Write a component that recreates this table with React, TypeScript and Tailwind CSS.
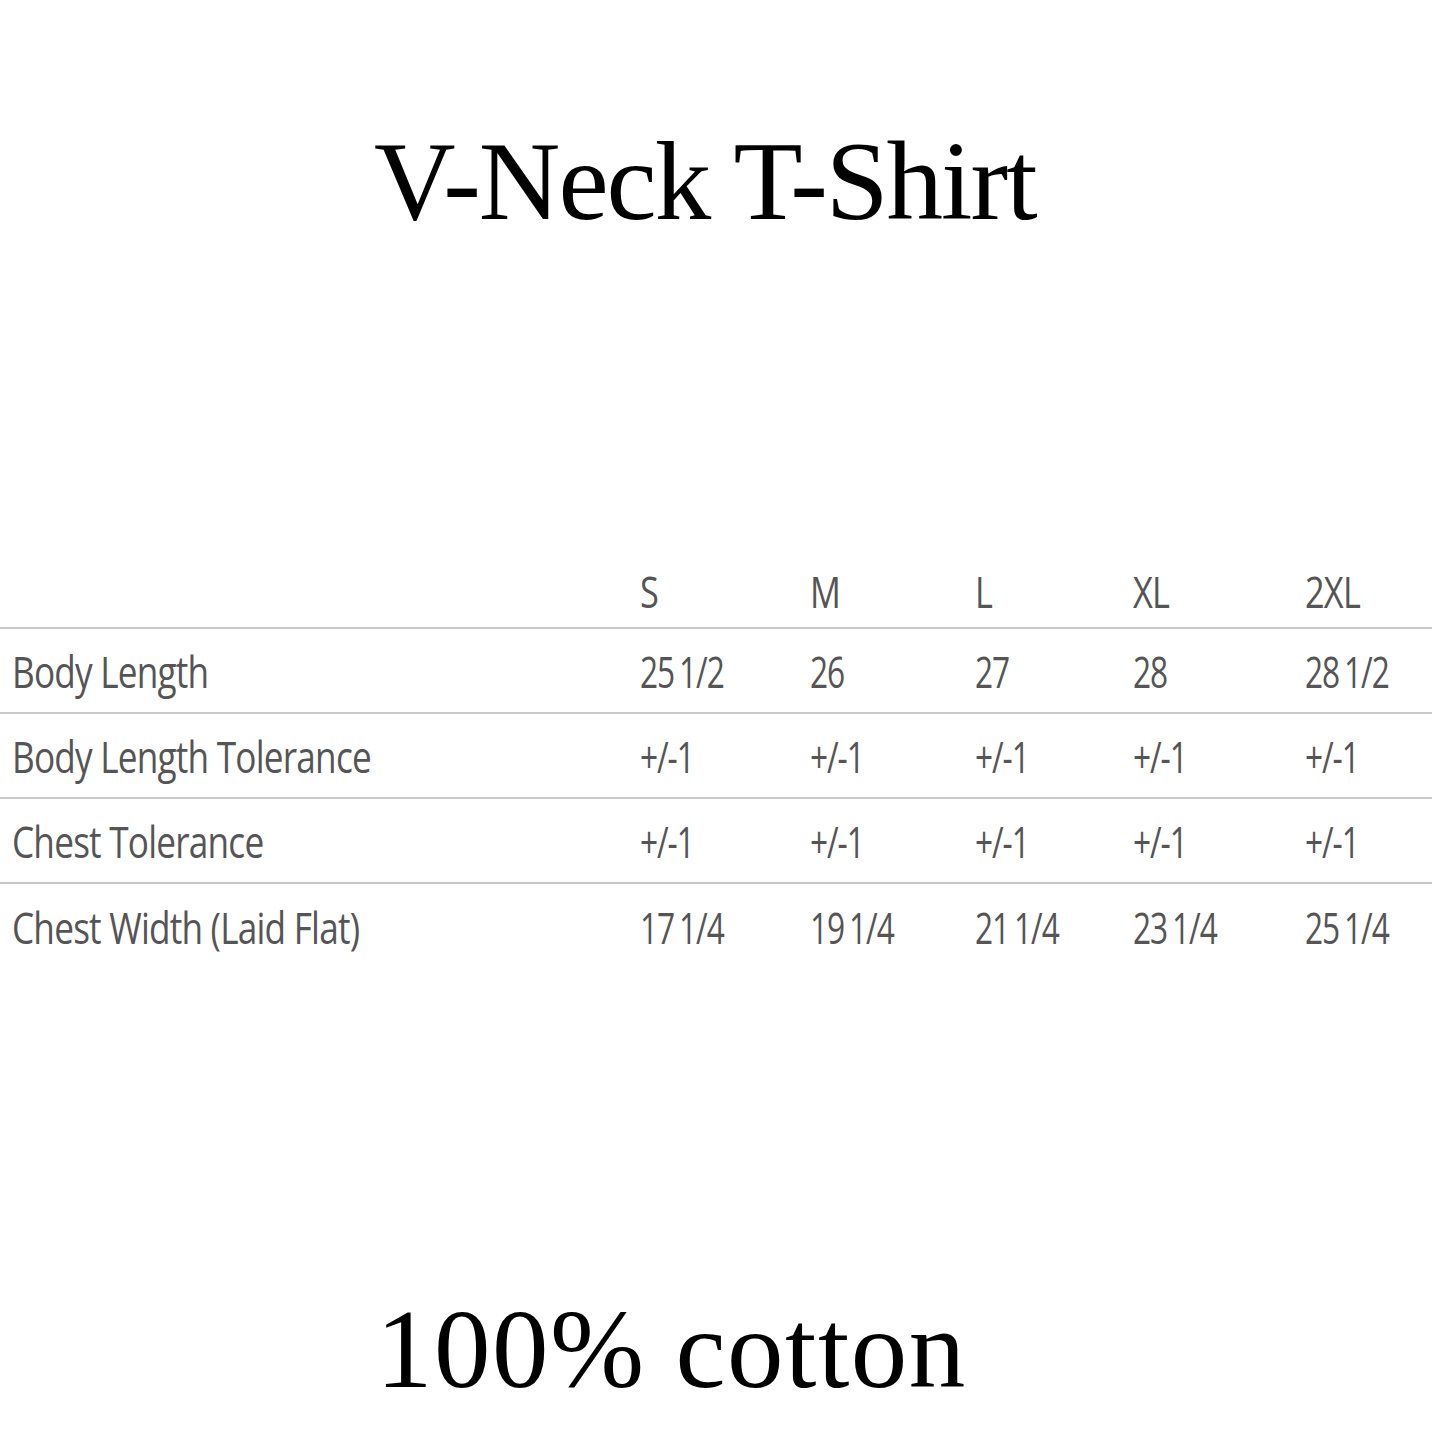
import React from "react";

const sizes = ["S", "M", "L", "XL", "2XL"];
const rows: [string, string[]][] = [
  ["Body Length", ["25 1/2", "26", "27", "28", "28 1/2"]],
  ["Body Length Tolerance", ["+/-1", "+/-1", "+/-1", "+/-1", "+/-1"]],
  ["Chest Tolerance", ["+/-1", "+/-1", "+/-1", "+/-1", "+/-1"]],
  ["Chest Width (Laid Flat)", ["17 1/4", "19 1/4", "21 1/4", "23 1/4", "25 1/4"]],
];

const cols = "grid grid-cols-[640px_170px_165px_158px_172px_127px]";
const labelCls =
  "text-[44px] leading-none text-[#555555] origin-left scale-x-[0.8] whitespace-nowrap tracking-[-1px]";
const valCls =
  "text-[44px] leading-none text-[#555555] origin-left scale-x-[0.72] whitespace-nowrap tracking-[-1.5px] [word-spacing:-3px]";
const headCls =
  "text-[44px] leading-none text-[#555555] origin-left scale-x-[0.78] whitespace-nowrap tracking-[-1px] font-medium";
const font = { fontFamily: '"Open Sans", "Liberation Sans", sans-serif' };

export default function App() {
  return (
    <div className="w-[1440px] h-[1440px] bg-white flex flex-col overflow-hidden">
      <div
        className="pl-[374px] pt-[121px] text-[113px] leading-[120px] text-black tracking-[-2px]"
        style={{ fontFamily: '"Liberation Serif", serif' }}
      >
        V-Neck T-Shirt
      </div>
      <div className="mt-[303px] w-[1432px]" style={font}>
        <div className={`${cols} h-[85px] border-b-2 border-[#c8c8c8] items-center`}>
          <div />
          {sizes.map((s) => (
            <div key={s} className="pt-[10px]">
              <div className={headCls}>{s}</div>
            </div>
          ))}
        </div>
        {rows.map(([label, vals], ri) => (
          <div
            key={label}
            className={`${cols} h-[85px] items-center ${
              ri < rows.length - 1 ? "border-b-2 border-[#c8c8c8]" : ""
            }`}
          >
            <div className="pl-[12px] pt-[1px]">
              <div className={labelCls}>{label}</div>
            </div>
            {vals.map((v, i) => (
              <div key={i} className="pt-[1px]">
                <div className={valCls}>{v}</div>
              </div>
            ))}
          </div>
        ))}
      </div>
      <div
        className="pl-[376px] mt-[320px] text-[113px] leading-[120px] text-black tracking-[1.5px]"
        style={{ fontFamily: '"Liberation Serif", serif' }}
      >
        100% cotton
      </div>
    </div>
  );
}
